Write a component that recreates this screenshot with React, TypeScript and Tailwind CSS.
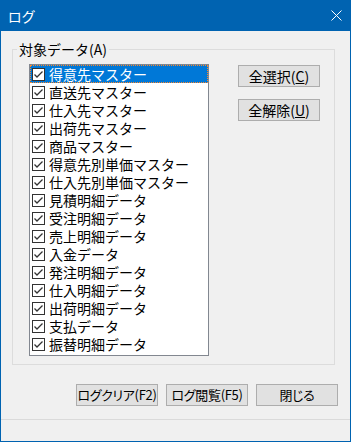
import React from 'react';

const items = [
  '得意先マスター',
  '直送先マスター',
  '仕入先マスター',
  '出荷先マスター',
  '商品マスター',
  '得意先別単価マスター',
  '仕入先別単価マスター',
  '見積明細データ',
  '受注明細データ',
  '売上明細データ',
  '入金データ',
  '発注明細データ',
  '仕入明細データ',
  '出荷明細データ',
  '支払データ',
  '振替明細データ',
];

const CheckBox = () => (
  <svg width="13" height="13" viewBox="0 0 13 13" className="shrink-0">
    <rect x="0.5" y="0.5" width="12" height="12" fill="#fff" stroke="#333" />
    <path d="M2.5 6.5 L5 9 L10.5 3.5" fill="none" stroke="#333" strokeWidth="1.3" />
  </svg>
);

const Button: React.FC<{ children: React.ReactNode; small?: boolean }> = ({ children, small }) => (
  <button
    className={`w-[82px] h-[22px] bg-[#e1e1e1] border border-[#adadad] leading-[16px] text-black flex items-center justify-center whitespace-nowrap ${
      small ? "text-[13px] tracking-[-0.3px] [font-feature-settings:'palt']" : 'text-[14px]'
    }`}
  >
    {children}
  </button>
);

export default function App() {
  return (
    <div className="w-[351px] h-[442px] flex flex-col border-x border-b border-[#0063b1] bg-[#f0f0f0] font-['Noto_Sans_CJK_JP',sans-serif] text-black select-none">
      {/* title bar */}
      <div className="h-[31px] shrink-0 bg-[#0063b1] flex items-center justify-between pl-[8px] pr-[9px] -mx-px">
        <span className="text-white text-[14px] leading-[18px] [font-feature-settings:'palt']">ログ</span>
        <svg width="11" height="11" viewBox="0 0 11 11">
          <path d="M0.5 0.5 L10.5 10.5 M10.5 0.5 L0.5 10.5" stroke="#fff" strokeWidth="1" />
        </svg>
      </div>

      <div className="flex flex-col flex-1">
        <fieldset className="mt-[9px] ml-[11px] w-[323px] border border-[#dcdcdc] px-0 pb-[8px]">
          <legend className="ml-[4px] px-[2px] text-[14px] leading-[18px]">対象データ(A)</legend>
          <div className="flex pl-[16px] pt-[6px]">
            <div className="w-[180px] h-[292px] border border-[#828790] bg-white">
              {items.map((label, i) => (
                <div
                  key={label}
                  className={`h-[18px] flex items-center gap-[4px] pl-[2px] ${
                    i === 0 ? 'bg-[#0078d7] text-white outline-1 outline-dotted outline-[#ff8728] -outline-offset-1' : ''
                  }`}
                >
                  <CheckBox />
                  <span className="block h-[18px] text-[14px] leading-[18px] whitespace-nowrap">{label}</span>
                </div>
              ))}
            </div>
            <div className="ml-[29px] mt-[1px] flex flex-col gap-[12px]">
              <Button>
                全選択(<span className="underline">C</span>)
              </Button>
              <Button>
                全解除(<span className="underline">U</span>)
              </Button>
            </div>
          </div>
        </fieldset>

        <div className="mt-[19px] flex justify-end gap-[8px] pr-[12px]">
          <Button small>ログクリア(F2)</Button>
          <Button small>ログ閲覧(F5)</Button>
          <Button small>閉じる</Button>
        </div>

        <div className="mt-[13px] h-px bg-[#dadada]" />
      </div>
    </div>
  );
}
